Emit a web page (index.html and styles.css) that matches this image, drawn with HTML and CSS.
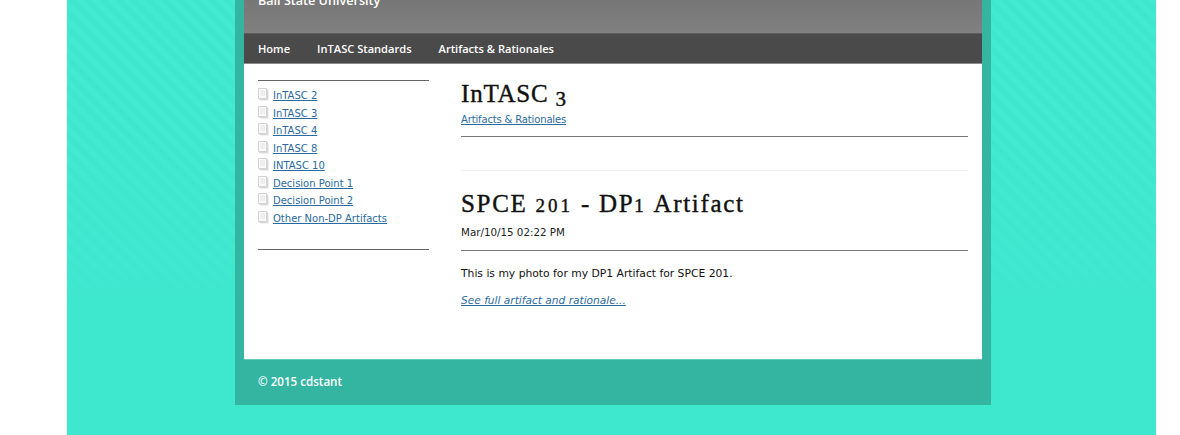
FILE: index.html
```html
<!DOCTYPE html>
<html lang="en">
<head>
<meta charset="utf-8">
<title>InTASC 3</title>
<link rel="stylesheet" href="styles.css">
</head>
<body>
<svg class="defs" width="0" height="0" aria-hidden="true">
  <symbol id="doc" viewBox="0 0 11 13">
    <path d="M2.5 2.5h8v10h-8z" fill="#dedede"/>
    <path d="M1.5 1.5h8v10h-8z" fill="#ececec" stroke="#d8d8d8"/>
    <path d="M0.5 0.5h8v10h-8z" fill="#fbfbfb" stroke="#d2d2d2"/>
    <path d="M2 3h5M2 5h5M2 7h5" stroke="#e2e2e2"/>
  </symbol>
</svg>
<div class="page">
  <div class="wrapper">
    <div class="inner">
      <header class="banner"><p class="school">Ball State University</p></header>
      <nav class="nav">
        <a href="#">Home</a>
        <a href="#">InTASC Standards</a>
        <a href="#">Artifacts &amp; Rationales</a>
      </nav>
      <div class="body-row">
        <aside class="sidebar">
          <ul class="side-list">
            <li><svg class="doc"><use href="#doc"/></svg><a href="#">InTASC 2</a></li>
            <li><svg class="doc"><use href="#doc"/></svg><a href="#">InTASC 3</a></li>
            <li><svg class="doc"><use href="#doc"/></svg><a href="#">InTASC 4</a></li>
            <li><svg class="doc"><use href="#doc"/></svg><a href="#">InTASC 8</a></li>
            <li><svg class="doc"><use href="#doc"/></svg><a href="#">INTASC 10</a></li>
            <li><svg class="doc"><use href="#doc"/></svg><a href="#">Decision Point 1</a></li>
            <li><svg class="doc"><use href="#doc"/></svg><a href="#">Decision Point 2</a></li>
            <li><svg class="doc"><use href="#doc"/></svg><a href="#">Other Non-DP Artifacts</a></li>
          </ul>
        </aside>
        <main class="content">
          <section class="intro">
            <h1>InTASC <span class="os os-low">3</span></h1>
            <p class="crumb"><a href="#">Artifacts &amp; Rationales</a></p>
          </section>
          <article class="post">
            <h2>SPCE <span class="os">201</span> - DP<span class="os">1</span> Artifact</h2>
            <p class="date">Mar/10/15 02:22 PM</p>
            <p class="text">This is my photo for my DP1 Artifact for SPCE 201.</p>
            <p class="more"><a href="#">See full artifact and rationale...</a></p>
          </article>
        </main>
      </div>
    </div>
    <footer class="footer">© 2015 cdstant</footer>
  </div>
</div>
</body>
</html>
```
FILE: styles.css
```css
* { box-sizing: border-box; }
html, body { margin: 0; height: 435px; overflow: hidden; background: #fff; }
body { font-family: "DejaVu Sans", Verdana, sans-serif; font-size: 10.75px; color: #111; }
.defs { position: absolute; }
.page {
  margin: 0 24px 0 67px;
  height: 435px;
  padding-left: 168px;
  overflow: hidden;
  background:
    linear-gradient(to bottom, rgba(62,232,207,0) 0, rgba(62,232,207,0) 120px, #3ee8cf 320px),
    repeating-linear-gradient(45deg, #3ee8cf 0, #3ee8cf 5.5px, #43ead2 5.5px, #43ead2 11px);
}
.wrapper { width: 756px; background: #33b5a2; padding: 0 9px; }
.inner { width: 738px; }
.banner {
  height: 33px;
  background: linear-gradient(to bottom, #777, #808080);
  padding-left: 14px;
  overflow: hidden;
}
.school, .nav a, .footer { font-family: "Open Sans", "DejaVu Sans", sans-serif; font-weight: 600; }
.school { margin: -7px 0 0; font-size: 12.6px; line-height: 16px; color: #fff; }
.nav {
  height: 31px;
  display: flex;
  align-items: center;
  gap: 27px;
  padding: 0 14px;
  background: #4a4a4a;
  border-top: 1px solid #5e5e5e;
  border-bottom: 1px solid #8a8a8a;
}
.nav a { color: #fff; text-decoration: none; font-size: 11.1px; }
.body-row { display: flex; gap: 32px; height: 296px; padding: 0 14px; background: #fff; border-bottom: 1px solid #5fcdbc; }
.sidebar { width: 171px; padding-top: 16px; }
.side-list {
  list-style: none;
  margin: 0;
  padding: 6px 0 22px;
  border-top: 1px solid #666;
  border-bottom: 1px solid #666;
}
.side-list li { display: flex; align-items: flex-start; height: 17.5px; line-height: 17px; }
.doc { width: 11px; height: 13px; margin: 1px 4px 0 0; flex: none; }
a { color: #2a6aa0; text-decoration: underline; }
.side-list a { font-size: 10px; }
.content { flex: 1; min-width: 0; }
.intro { padding: 15px 0 9px; border-bottom: 1px solid #777; }
h1, h2 { margin: 0; font-family: "Liberation Serif", Georgia, serif; font-weight: normal; color: #111; -webkit-text-stroke: 0.4px #111; }
h1 { font-size: 25px; line-height: 29px; letter-spacing: 0.8px; }
h2 { font-size: 25px; line-height: 29px; letter-spacing: 1.7px; }
.os { font-size: 19px; letter-spacing: 3px; }
.os-low { position: relative; top: 4px; font-size: 21px; letter-spacing: 0; }
.crumb { margin: 3px 0 0; line-height: 14px; font-size: 10px; letter-spacing: -0.15px; }
.post { margin-top: 33px; padding-top: 18px; border-top: 1px solid #eee; }
.date { margin: 4px 0 0; padding-bottom: 10px; border-bottom: 1px solid #777; line-height: 16px; font-size: 10.3px; color: #222; }
.text { margin: 15px 0 0; line-height: 16px; }
.more { margin: 10px 0 0; line-height: 16px; font-style: italic; font-size: 10.6px; }
.footer { height: 45px; padding: 14px 0 0 23px; line-height: 16px; color: #fff; font-size: 11.6px; margin: 0 -9px; }
```
